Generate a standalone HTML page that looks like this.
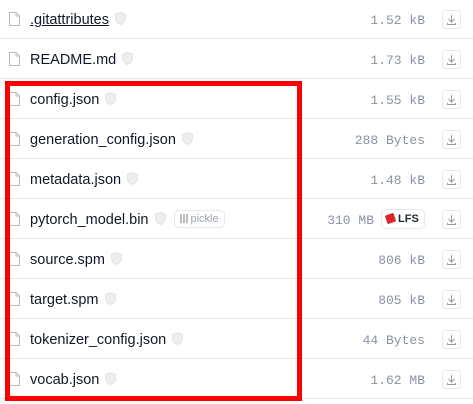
<!DOCTYPE html><html><head><style>
body{margin:0;width:473px;height:404px;overflow:hidden;background:#fff;font-family:"Liberation Sans",sans-serif;position:relative}
.row{position:absolute;left:0;width:473px;height:40px;border-bottom:1px solid #e5e7eb;box-sizing:border-box}
.fi{position:absolute;left:9px;top:13px}
.nm{position:absolute;left:30px;top:13px;font-size:14.5px;color:#111827}
.sh{display:inline-block;vertical-align:middle;margin-left:6px;margin-top:-3px}
.sz{position:absolute;right:48px;top:14px;font-family:"Liberation Mono",monospace;font-size:13px;color:#8b93a1}
.dl{position:absolute;left:442px;top:11px;width:17px;height:17px;border:1px solid #e5e7eb;border-radius:3px}
.tag{display:inline-block;vertical-align:middle;margin-left:8px;margin-top:-3px;border:1px solid #e5e7eb;border-radius:5px;font-size:11px;color:#9ca3af;padding:1px 5px 1px 5px;line-height:14px}
.box{position:absolute;left:5px;top:81px;width:297px;height:320px;border:5px solid #f00;box-sizing:border-box}
</style></head><body>
<div class="row" style="top:-1px"><svg class="fi" width="11" height="14" viewBox="0 0 11 14"><path d="M.5.5h6.5l3.5 3.5v9.5h-10z M7 .5v3.5h3.5" fill="none" stroke="#bbb"/></svg><span class="nm" style="text-decoration:underline">.gitattributes<svg class="sh" width="11" height="13" viewBox="0 0 11 13"><path d="M5.5.5l5 2v4c0 3-2.5 5-5 6-2.5-1-5-3-5-6v-4z" fill="#eee" stroke="#e3e3e3"/></svg></span><span class="sz">1.52 kB</span><div class="dl"><svg width="17" height="17"><path d="M8.5 4v7M5.5 8l3 3 3-3M4.5 12v1.5h8v-1.5" fill="none" stroke="#999"/></svg></div></div>
<div class="row" style="top:39px"><svg class="fi" width="11" height="14" viewBox="0 0 11 14"><path d="M.5.5h6.5l3.5 3.5v9.5h-10z M7 .5v3.5h3.5" fill="none" stroke="#bbb"/></svg><span class="nm">README.md<svg class="sh" width="11" height="13" viewBox="0 0 11 13"><path d="M5.5.5l5 2v4c0 3-2.5 5-5 6-2.5-1-5-3-5-6v-4z" fill="#eee" stroke="#e3e3e3"/></svg></span><span class="sz">1.73 kB</span><div class="dl"><svg width="17" height="17"><path d="M8.5 4v7M5.5 8l3 3 3-3M4.5 12v1.5h8v-1.5" fill="none" stroke="#999"/></svg></div></div>
<div class="row" style="top:79px"><svg class="fi" width="11" height="14" viewBox="0 0 11 14"><path d="M.5.5h6.5l3.5 3.5v9.5h-10z M7 .5v3.5h3.5" fill="none" stroke="#bbb"/></svg><span class="nm">config.json<svg class="sh" width="11" height="13" viewBox="0 0 11 13"><path d="M5.5.5l5 2v4c0 3-2.5 5-5 6-2.5-1-5-3-5-6v-4z" fill="#eee" stroke="#e3e3e3"/></svg></span><span class="sz">1.55 kB</span><div class="dl"><svg width="17" height="17"><path d="M8.5 4v7M5.5 8l3 3 3-3M4.5 12v1.5h8v-1.5" fill="none" stroke="#999"/></svg></div></div>
<div class="row" style="top:119px"><svg class="fi" width="11" height="14" viewBox="0 0 11 14"><path d="M.5.5h6.5l3.5 3.5v9.5h-10z M7 .5v3.5h3.5" fill="none" stroke="#bbb"/></svg><span class="nm">generation_config.json<svg class="sh" width="11" height="13" viewBox="0 0 11 13"><path d="M5.5.5l5 2v4c0 3-2.5 5-5 6-2.5-1-5-3-5-6v-4z" fill="#eee" stroke="#e3e3e3"/></svg></span><span class="sz">288 Bytes</span><div class="dl"><svg width="17" height="17"><path d="M8.5 4v7M5.5 8l3 3 3-3M4.5 12v1.5h8v-1.5" fill="none" stroke="#999"/></svg></div></div>
<div class="row" style="top:159px"><svg class="fi" width="11" height="14" viewBox="0 0 11 14"><path d="M.5.5h6.5l3.5 3.5v9.5h-10z M7 .5v3.5h3.5" fill="none" stroke="#bbb"/></svg><span class="nm">metadata.json<svg class="sh" width="11" height="13" viewBox="0 0 11 13"><path d="M5.5.5l5 2v4c0 3-2.5 5-5 6-2.5-1-5-3-5-6v-4z" fill="#eee" stroke="#e3e3e3"/></svg></span><span class="sz">1.48 kB</span><div class="dl"><svg width="17" height="17"><path d="M8.5 4v7M5.5 8l3 3 3-3M4.5 12v1.5h8v-1.5" fill="none" stroke="#999"/></svg></div></div>
<div class="row" style="top:199px"><svg class="fi" width="11" height="14" viewBox="0 0 11 14"><path d="M.5.5h6.5l3.5 3.5v9.5h-10z M7 .5v3.5h3.5" fill="none" stroke="#bbb"/></svg><span class="nm">pytorch_model.bin<svg class="sh" width="11" height="13" viewBox="0 0 11 13"><path d="M5.5.5l5 2v4c0 3-2.5 5-5 6-2.5-1-5-3-5-6v-4z" fill="#eee" stroke="#e3e3e3"/></svg><span class="tag"><span style="display:inline-block;width:8px;height:9px;background:repeating-linear-gradient(90deg,#bbb 0 2px,#fff 2px 3px);vertical-align:-1px;margin-right:3px"></span>pickle</span></span><span class="sz" style="right:99px">310 MB</span><span style="position:absolute;left:381px;top:10px;border:1px solid #e5e7eb;border-radius:5px;font-size:11px;font-weight:bold;color:#1f2937;padding:2px 5px 2px 4px;line-height:14px"><span style="display:inline-block;width:9px;height:9px;background:#dc2626;transform:rotate(-20deg);border-radius:1px;margin-right:3px;vertical-align:-1px"></span>LFS</span><div class="dl"><svg width="17" height="17"><path d="M8.5 4v7M5.5 8l3 3 3-3M4.5 12v1.5h8v-1.5" fill="none" stroke="#999"/></svg></div></div>
<div class="row" style="top:239px"><svg class="fi" width="11" height="14" viewBox="0 0 11 14"><path d="M.5.5h6.5l3.5 3.5v9.5h-10z M7 .5v3.5h3.5" fill="none" stroke="#bbb"/></svg><span class="nm">source.spm<svg class="sh" width="11" height="13" viewBox="0 0 11 13"><path d="M5.5.5l5 2v4c0 3-2.5 5-5 6-2.5-1-5-3-5-6v-4z" fill="#eee" stroke="#e3e3e3"/></svg></span><span class="sz">806 kB</span><div class="dl"><svg width="17" height="17"><path d="M8.5 4v7M5.5 8l3 3 3-3M4.5 12v1.5h8v-1.5" fill="none" stroke="#999"/></svg></div></div>
<div class="row" style="top:279px"><svg class="fi" width="11" height="14" viewBox="0 0 11 14"><path d="M.5.5h6.5l3.5 3.5v9.5h-10z M7 .5v3.5h3.5" fill="none" stroke="#bbb"/></svg><span class="nm">target.spm<svg class="sh" width="11" height="13" viewBox="0 0 11 13"><path d="M5.5.5l5 2v4c0 3-2.5 5-5 6-2.5-1-5-3-5-6v-4z" fill="#eee" stroke="#e3e3e3"/></svg></span><span class="sz">805 kB</span><div class="dl"><svg width="17" height="17"><path d="M8.5 4v7M5.5 8l3 3 3-3M4.5 12v1.5h8v-1.5" fill="none" stroke="#999"/></svg></div></div>
<div class="row" style="top:319px"><svg class="fi" width="11" height="14" viewBox="0 0 11 14"><path d="M.5.5h6.5l3.5 3.5v9.5h-10z M7 .5v3.5h3.5" fill="none" stroke="#bbb"/></svg><span class="nm">tokenizer_config.json<svg class="sh" width="11" height="13" viewBox="0 0 11 13"><path d="M5.5.5l5 2v4c0 3-2.5 5-5 6-2.5-1-5-3-5-6v-4z" fill="#eee" stroke="#e3e3e3"/></svg></span><span class="sz">44 Bytes</span><div class="dl"><svg width="17" height="17"><path d="M8.5 4v7M5.5 8l3 3 3-3M4.5 12v1.5h8v-1.5" fill="none" stroke="#999"/></svg></div></div>
<div class="row" style="top:359px"><svg class="fi" width="11" height="14" viewBox="0 0 11 14"><path d="M.5.5h6.5l3.5 3.5v9.5h-10z M7 .5v3.5h3.5" fill="none" stroke="#bbb"/></svg><span class="nm">vocab.json<svg class="sh" width="11" height="13" viewBox="0 0 11 13"><path d="M5.5.5l5 2v4c0 3-2.5 5-5 6-2.5-1-5-3-5-6v-4z" fill="#eee" stroke="#e3e3e3"/></svg></span><span class="sz">1.62 MB</span><div class="dl"><svg width="17" height="17"><path d="M8.5 4v7M5.5 8l3 3 3-3M4.5 12v1.5h8v-1.5" fill="none" stroke="#999"/></svg></div></div>
<div class="box"></div>
</body></html>
